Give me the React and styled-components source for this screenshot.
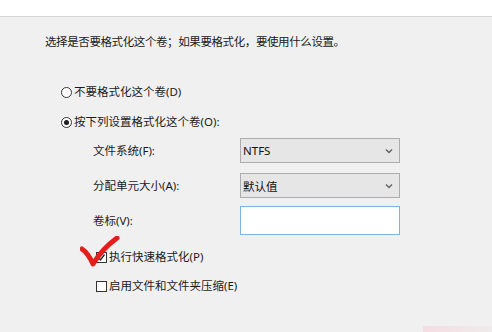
import React from "react";
import styled, { createGlobalStyle } from "styled-components";

const GlobalStyle = createGlobalStyle`
  html, body {
    margin: 0;
    padding: 0;
    background: #f0f0f0;
  }
  body {
    font-family: "Noto Sans", "Noto Sans CJK SC", sans-serif;
    font-size: 11.5px;
    color: #1b1b1b;
  }
`;

const Window = styled.div`
  position: relative;
  width: 492px;
  height: 332px;
  overflow: hidden;
  background: #f0f0f0;
`;

const TopBar = styled.div`
  height: 16px;
  background: #ffffff;
  border-bottom: 1px solid #d6d6d6;
`;

const Panel = styled.div`
  display: flex;
  flex-direction: column;
  padding: 16px 0 0 45px;
`;

const Intro = styled.div`
  height: 16px;
  line-height: 16px;
  white-space: nowrap;
  letter-spacing: -0.4px;
  font-family: "Noto Sans CJK SC", sans-serif;
`;

const OptionList = styled.div`
  display: flex;
  flex-direction: column;
  gap: 14px;
  margin: 35px 0 0 16px;
`;

const Row = styled.label`
  display: flex;
  align-items: center;
  height: 16px;
  line-height: 16px;
  white-space: nowrap;
  font-family: "Noto Sans", "Noto Sans CJK SC", sans-serif;
`;

const Radio = styled.span`
  box-sizing: border-box;
  width: 11px;
  height: 11px;
  margin-right: 2px;
  border: 1px solid #333;
  border-radius: 50%;
  background: #fff;
  display: flex;
  align-items: center;
  justify-content: center;

  &::after {
    content: "";
    display: ${(p) => (p.$checked ? "block" : "none")};
    width: 5px;
    height: 5px;
    border-radius: 50%;
    background: #1e1e1e;
  }
`;

const Form = styled.div`
  display: flex;
  flex-direction: column;
  margin: 0 0 0 48px;
`;

const FieldRow = styled.div`
  display: grid;
  grid-template-columns: 147px 160px;
  align-items: center;
  height: ${(p) => p.$height}px;
  margin-top: ${(p) => p.$gap}px;
`;

const FieldLabel = styled.div`
  white-space: nowrap;
  line-height: 16px;
`;

const Select = styled.div`
  box-sizing: border-box;
  height: 25px;
  display: flex;
  align-items: center;
  justify-content: space-between;
  padding: 0 6px 0 2px;
  border: 1px solid #adadad;
  background: #e6e6e6;
  color: #111;
`;

const TextInput = styled.div`
  box-sizing: border-box;
  height: 29px;
  border: 1px solid #7eb2e4;
  background: #fff;
`;

const CheckList = styled.div`
  display: flex;
  flex-direction: column;
  gap: 13px;
  margin: 14px 0 0 51px;
`;

const CheckRow = styled(Row)`
  position: relative;
`;

const Box = styled.span`
  box-sizing: border-box;
  width: 11px;
  height: 11px;
  margin-right: 2px;
  border: 1px solid #333;
  background: #fff;
  display: flex;
  align-items: center;
  justify-content: center;
`;

const Annotation = styled.svg`
  position: absolute;
  left: -16px;
  top: -13px;
  pointer-events: none;
`;

const CornerGlow = styled.div`
  position: absolute;
  right: 0;
  bottom: 0;
  width: 69px;
  height: 6px;
  background: linear-gradient(90deg, #f4dde2, #f1e6e8 60%, #efeaeb);
`;

const Chevron = () => (
  <svg width="8" height="6" viewBox="0 0 8 6">
    <path d="M1 1.5 L4 4.5 L7 1.5" fill="none" stroke="#666" strokeWidth="1.5" />
  </svg>
);

const App = () => {
  return (
    <Window>
      <GlobalStyle />
      <TopBar />
      <Panel>
        <Intro>选择是否要格式化这个卷；如果要格式化，要使用什么设置。</Intro>

        <OptionList>
          <Row>
            <Radio />
            不要格式化这个卷(D)
          </Row>
          <Row>
            <Radio $checked />
            按下列设置格式化这个卷(O):
          </Row>
        </OptionList>

        <Form>
          <FieldRow $height={25} $gap={8}>
            <FieldLabel>文件系统(F):</FieldLabel>
            <Select>
              NTFS
              <Chevron />
            </Select>
          </FieldRow>
          <FieldRow $height={25} $gap={10}>
            <FieldLabel>分配单元大小(A):</FieldLabel>
            <Select>
              默认值
              <Chevron />
            </Select>
          </FieldRow>
          <FieldRow $height={29} $gap={8}>
            <FieldLabel>卷标(V):</FieldLabel>
            <TextInput />
          </FieldRow>
        </Form>

        <CheckList>
          <CheckRow>
            <Box>
              <svg width="9" height="9" viewBox="0 0 9 9">
                <path d="M1.5 4.5 L3.5 7 L7.5 1.5" fill="none" stroke="#222" strokeWidth="1.3" />
              </svg>
            </Box>
            执行快速格式化(P)
            <Annotation width="44" height="34" viewBox="0 0 44 34">
              <path
                d="M2 13 Q8 17 13 28 Q22 13 37 2"
                fill="none"
                stroke="#e41e1a"
                strokeWidth="5"
                strokeLinecap="round"
                strokeLinejoin="round"
              />
            </Annotation>
          </CheckRow>
          <CheckRow>
            <Box />
            启用文件和文件夹压缩(E)
          </CheckRow>
        </CheckList>
      </Panel>
      <CornerGlow />
    </Window>
  );
};

export default App;
